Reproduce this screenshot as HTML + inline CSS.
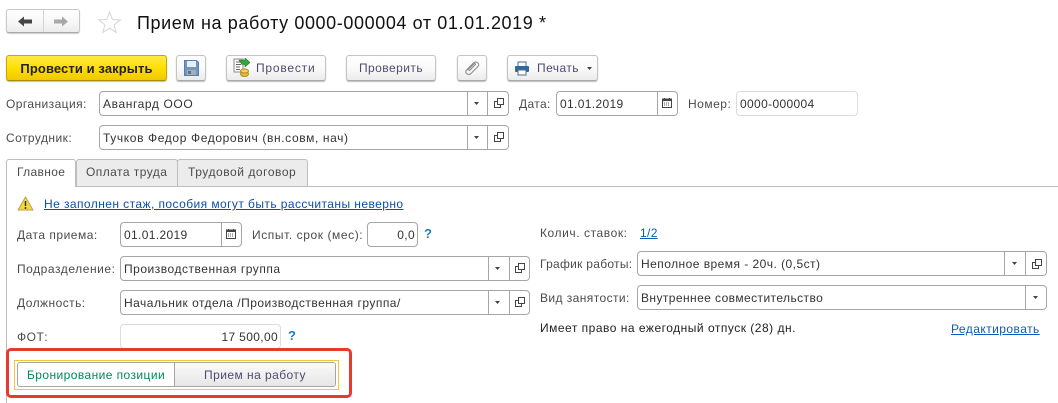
<!DOCTYPE html>
<html lang="ru"><head><meta charset="utf-8"><style>
html,body{margin:0;padding:0;background:#fff}
#p{position:relative;width:1058px;height:403px;overflow:hidden;background:#fff;font-family:"Liberation Sans",sans-serif;font-size:12px;letter-spacing:.35px;color:#4b4b4b}
#p div,#p a,#p svg{position:absolute;box-sizing:border-box}
.t{white-space:nowrap;line-height:14px}
.v{color:#333}
.btn{height:26px;top:55px;border:1px solid #c4c4c4;border-bottom-color:#a8a8a8;border-radius:3px;background:linear-gradient(#fff,#fafafa 50%,#ebebeb);box-shadow:0 1px 1px #bbb;color:#4e4a6e;text-align:center;line-height:25px}
.f{border:1px solid #a6a6a6;border-radius:4px;background:#fff;height:25px}
.f .s{top:0;bottom:0;width:1px;background:#a6a6a6}
.l{color:#4b4b4b}
a{color:#0b5cb8;text-decoration:underline}
</style></head><body><div id="p">

<div style="left:6px;top:9px;width:74px;height:24px;border:1px solid #c8c8c8;border-bottom-color:#a8a8a8;border-radius:3px;background:linear-gradient(#fff,#f6f6f6 60%,#ebebeb);box-shadow:0 1px 1px #ccc"></div>
<div style="left:43px;top:10px;width:1px;height:22px;background:#d4d4d4"></div>
<svg style="left:18px;top:16px" width="15" height="11" viewBox="0 0 15 11"><path d="M0 5.500 6 .5V3.500H14V7.500H6V10.500Z" fill="#454545"/></svg>
<svg style="left:54px;top:16px" width="15" height="11" viewBox="0 0 15 11"><path d="M14 5.500 8 .5V3.500H0V7.500H8V10.500Z" fill="#a8a8a8"/></svg>
<svg style="left:97px;top:10px" width="25" height="24" viewBox="0 0 25 24"><path d="M12.500 2 15.400 9.400 23.200 9.900 17.100 14.800 19.100 22.400 12.500 18.200 5.900 22.400 7.900 14.800 1.800 9.900 9.600 9.400Z" fill="#fff" stroke="#d8d8d8" stroke-width="1.100"/></svg>
<div class="t" style="left:137px;top:12px;font-size:18px;line-height:22px;letter-spacing:.6px;color:#111">Прием на работу 0000-000004 от 01.01.2019 *</div>

<div class="btn" style="left:6px;width:161px;background:linear-gradient(#ffe94a,#ffdf00 50%,#efc900);border-color:#c9a600;border-bottom-color:#a88b00;color:#222;font-weight:bold;font-size:13px;letter-spacing:.1px">Провести и закрыть</div>
<div class="btn" style="left:176px;width:30px"></div>
<svg style="left:184px;top:60px" width="15" height="16" viewBox="0 0 15 16"><path d="M.5.5H12.500L14.500 2.500V15.500H.5Z" fill="#6f97c6" stroke="#527fb0"/><rect x="3" y="1" width="9" height="6" fill="#e6eef6"/><rect x="3" y="10" width="9" height="5" fill="#a9aeb4"/><rect x="4" y="11" width="3" height="3" fill="#66717c"/></svg>
<div class="btn" style="left:226px;width:100px"></div>
<div class="t" style="left:256px;top:61px;letter-spacing:.8px;color:#4e4a6e">Провести</div>
<svg style="left:233px;top:58px" width="17" height="19" viewBox="0 0 17 19"><path d="M1 1H10V14H1Z" fill="#fff" stroke="#8a8a8a"/><path d="M3 4H8M3 6.500H8M3 9H7M3 11.500H7" stroke="#666"/><ellipse cx="11.500" cy="16" rx="4" ry="2.500" fill="#e6b93a" stroke="#b58a1c"/><ellipse cx="11.500" cy="13" rx="4" ry="2" fill="#f3d268" stroke="#b58a1c"/><path d="M6 2H12V0L17 4.500 12 9V6.500H9Z" fill="#35a53c" stroke="#1f7f29" stroke-width=".6"/></svg>
<div class="btn" style="left:346px;width:90px;letter-spacing:.45px">Проверить</div>
<div class="btn" style="left:457px;width:30px"></div>
<svg style="left:464px;top:60px" width="16" height="16" viewBox="0 0 16 16"><path d="M3 9.500 9.500 3C11 1.500 13 1.800 14 3S14.800 5.800 13.500 7L7 13.500C5.500 15 3.500 14.500 2.500 13.500S1.500 10.800 3 9.500M5 11 11 5C12 4 10.800 3 10 3.800L3.500 10.300" fill="none" stroke="#8f8f8f" stroke-width="1.100"/></svg>
<div class="btn" style="left:507px;width:91px"></div>
<div class="t" style="left:537px;top:61px;letter-spacing:.45px;color:#4e4a6e">Печать</div>
<svg style="left:514px;top:61px" width="16" height="15" viewBox="0 0 16 15"><rect x="4" y="1" width="8" height="5" fill="#fff" stroke="#4a6f96"/><rect x="1" y="5" width="14" height="6" rx="1" fill="#2f6a9f"/><rect x="4" y="9" width="8" height="5" fill="#fff" stroke="#4a6f96"/></svg>
<svg style="left:587px;top:67px" width="5" height="3"><path d="M0 0H5L2.500 3Z" fill="#444"/></svg>

<div class="t l" style="left:6px;top:97px;letter-spacing:.42px">Организация:</div>
<div class="f" style="left:99px;top:91px;width:410px"><div class="s" style="left:367px"></div><div class="s" style="left:387px"></div></div>
<div class="t v" style="left:103px;top:97px;letter-spacing:.6px">Авангард ООО</div>
<svg style="left:474px;top:102px" width="5" height="3"><path d="M0 0H5L2.500 3Z" fill="#444"/></svg>
<svg style="left:494px;top:98px" width="10" height="10" viewBox="0 0 10 10"><path d="M3.500.5H9.500V6.500H3.500ZM3.500 3.500H.5V9.500H6.500V6.500" fill="none" stroke="#444"/></svg>
<div class="t l" style="left:519px;top:97px">Дата:</div>
<div class="f" style="left:556px;top:91px;width:122px"><div class="s" style="left:100px"></div></div>
<div class="t v" style="left:560px;top:97px">01.01.2019</div>
<svg style="left:662px;top:98px" width="10" height="10" viewBox="0 0 10 10"><path d="M2.500 0V1.500M7.500 0V1.500" stroke="#444"/><rect x=".5" y="1" width="9" height="8.500" fill="#fff" stroke="#444"/><rect x="1" y="1" width="8" height="2" fill="#444"/><path d="M2 5H8M2 7H8" stroke="#555" stroke-dasharray="1 1"/></svg>
<div class="t l" style="left:688px;top:97px;letter-spacing:.5px">Номер:</div>
<div class="f" style="left:736px;top:91px;width:122px;border-color:#dcdcdc"></div>
<div class="t v" style="left:740px;top:97px">0000-000004</div>

<div class="t l" style="left:6px;top:131px;letter-spacing:.45px">Сотрудник:</div>
<div class="f" style="left:99px;top:125px;width:410px"><div class="s" style="left:367px"></div><div class="s" style="left:387px"></div></div>
<div class="t v" style="left:103px;top:131px;letter-spacing:.62px">Тучков Федор Федорович (вн.совм, нач)</div>
<svg style="left:474px;top:136px" width="5" height="3"><path d="M0 0H5L2.500 3Z" fill="#444"/></svg>
<svg style="left:494px;top:132px" width="10" height="10" viewBox="0 0 10 10"><path d="M3.500.5H9.500V6.500H3.500ZM3.500 3.500H.5V9.500H6.500V6.500" fill="none" stroke="#444"/></svg>

<div style="left:6px;top:186px;width:1052px;height:1px;background:#bdbdbd"></div>
<div style="left:6px;top:186px;width:1px;height:217px;background:#bdbdbd"></div>
<div style="left:76px;top:159px;width:102px;height:27px;background:#ececec;border:1px solid #bdbdbd;border-bottom:0;border-radius:3px 3px 0 0"></div>
<div style="left:177px;top:159px;width:131px;height:27px;background:#ececec;border:1px solid #bdbdbd;border-bottom:0;border-radius:3px 3px 0 0"></div>
<div style="left:6px;top:159px;width:70px;height:28px;background:#fff;border:1px solid #bdbdbd;border-bottom:0;border-radius:3px 3px 0 0"></div>
<div class="t l" style="left:17px;top:165px">Главное</div>
<div class="t l" style="left:86px;top:165px;letter-spacing:.45px">Оплата труда</div>
<div class="t l" style="left:188px;top:165px;letter-spacing:.55px">Трудовой договор</div>

<svg style="left:17px;top:196px" width="17" height="15" viewBox="0 0 17 15"><path d="M8.500 1 16 14H1Z" fill="#f5d83a" stroke="#b9a24a" stroke-linejoin="round"/><path d="M8.500 5V10M8.500 11V13" stroke="#333" stroke-width="1.500"/></svg>
<a class="t" style="left:44px;top:197px;letter-spacing:.43px;color:#0b4fa8">Не заполнен стаж, пособия могут быть рассчитаны неверно</a>

<div class="t l" style="left:17px;top:228px;letter-spacing:.5px">Дата приема:</div>
<div class="f" style="left:120px;top:222px;width:122px"><div class="s" style="left:100px"></div></div>
<div class="t v" style="left:124px;top:228px">01.01.2019</div>
<svg style="left:226px;top:229px" width="10" height="10" viewBox="0 0 10 10"><path d="M2.500 0V1.500M7.500 0V1.500" stroke="#444"/><rect x=".5" y="1" width="9" height="8.500" fill="#fff" stroke="#444"/><rect x="1" y="1" width="8" height="2" fill="#444"/><path d="M2 5H8M2 7H8" stroke="#555" stroke-dasharray="1 1"/></svg>
<div class="t l" style="left:252px;top:228px;letter-spacing:.58px">Испыт. срок (мес):</div>
<div class="f" style="left:367px;top:222px;width:51px"></div>
<div class="t v" style="left:367px;top:228px;width:48px;text-align:right">0,0</div>
<div class="t" style="left:424px;top:227px;color:#1a7fc0;font-weight:bold;font-size:13px">?</div>

<div class="t l" style="left:17px;top:262px;letter-spacing:.55px">Подразделение:</div>
<div class="f" style="left:120px;top:256px;width:410px"><div class="s" style="left:367px"></div><div class="s" style="left:388px"></div></div>
<div class="t v" style="left:124px;top:262px;letter-spacing:.52px">Производственная группа</div>
<svg style="left:495px;top:267px" width="5" height="3"><path d="M0 0H5L2.500 3Z" fill="#444"/></svg>
<svg style="left:515px;top:263px" width="10" height="10" viewBox="0 0 10 10"><path d="M3.500.5H9.500V6.500H3.500ZM3.500 3.500H.5V9.500H6.500V6.500" fill="none" stroke="#444"/></svg>

<div class="t l" style="left:17px;top:296px;letter-spacing:.45px">Должность:</div>
<div class="f" style="left:120px;top:290px;width:410px"><div class="s" style="left:367px"></div><div class="s" style="left:388px"></div></div>
<div class="t v" style="left:124px;top:296px;letter-spacing:.49px">Начальник отдела /Производственная группа/</div>
<svg style="left:495px;top:301px" width="5" height="3"><path d="M0 0H5L2.500 3Z" fill="#444"/></svg>
<svg style="left:515px;top:297px" width="10" height="10" viewBox="0 0 10 10"><path d="M3.500.5H9.500V6.500H3.500ZM3.500 3.500H.5V9.500H6.500V6.500" fill="none" stroke="#444"/></svg>

<div class="t l" style="left:17px;top:330px;letter-spacing:.5px">ФОТ:</div>
<div class="f" style="left:120px;top:324px;width:161px;border-color:#dcdcdc"></div>
<div class="t v" style="left:120px;top:330px;width:158px;text-align:right">17 500,00</div>
<div class="t" style="left:288px;top:329px;color:#1a7fc0;font-weight:bold;font-size:13px">?</div>

<div style="left:6px;top:348px;width:346px;height:50px;border:3px solid #e8392f;border-radius:5px;background:#fff"></div>
<div style="left:14px;top:360px;width:325px;height:30px;border:1px solid #f2c63c"></div>
<div style="left:17px;top:362px;width:319px;height:25px;border:1px solid #a6a6a6;border-radius:3px;background:#fff"></div>
<div style="left:174px;top:363px;width:161px;height:23px;background:linear-gradient(#fafafa,#e6e6e6);border-left:1px solid #a6a6a6;border-radius:0 2px 2px 0"></div>
<div class="t" style="left:27px;top:368px;color:#00875a;letter-spacing:.42px">Бронирование позиции</div>
<div class="t" style="left:175px;top:368px;width:160px;text-align:center;color:#4e4a6e;letter-spacing:.45px">Прием на работу</div>

<div class="t l" style="left:540px;top:226px;letter-spacing:.57px">Колич. ставок:</div>
<a class="t" style="left:640px;top:226px">1/2</a>
<div class="t l" style="left:540px;top:257px;letter-spacing:.28px">График работы:</div>
<div class="f" style="left:637px;top:251px;width:410px"><div class="s" style="left:366px"></div><div class="s" style="left:387px"></div></div>
<div class="t v" style="left:641px;top:257px;letter-spacing:.46px">Неполное время - 20ч. (0,5ст)</div>
<svg style="left:1012px;top:262px" width="5" height="3"><path d="M0 0H5L2.500 3Z" fill="#444"/></svg>
<svg style="left:1032px;top:259px" width="10" height="10" viewBox="0 0 10 10"><path d="M3.500.5H9.500V6.500H3.500ZM3.500 3.500H.5V9.500H6.500V6.500" fill="none" stroke="#444"/></svg>
<div class="t l" style="left:540px;top:291px;letter-spacing:.42px">Вид занятости:</div>
<div class="f" style="left:637px;top:285px;width:410px"><div class="s" style="left:387px"></div></div>
<div class="t v" style="left:641px;top:291px;letter-spacing:.42px">Внутреннее совместительство</div>
<svg style="left:1033px;top:296px" width="5" height="3"><path d="M0 0H5L2.500 3Z" fill="#444"/></svg>
<div class="t" style="left:540px;top:321px;color:#222;letter-spacing:.5px">Имеет право на ежегодный отпуск (28) дн.</div>
<a class="t" style="left:951px;top:322px;letter-spacing:.45px">Редактировать</a>
</div></body></html>
